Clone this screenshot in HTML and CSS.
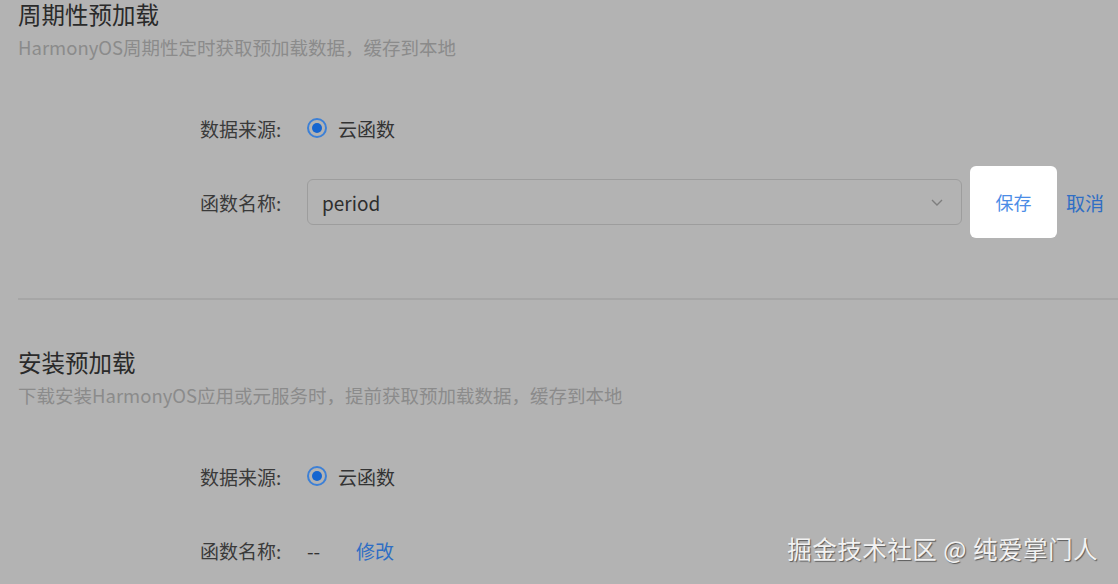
FILE: index.html
```html
<!DOCTYPE html>
<html lang="zh-CN">
<head>
  <meta charset="UTF-8" />
  <meta name="viewport" content="width=device-width, initial-scale=1.0"/>
  <title>预加载配置</title>
  <link rel="stylesheet" href="styles.css">
</head>
<body>

<div class="page">
  <div class="section">
    <h2 class="title">周期性预加载</h2>
    <p class="desc">HarmonyOS周期性定时获取预加载数据，缓存到本地</p>

    <div class="form">
      <div class="row">
        <span class="label">数据来源:</span>
        <span class="radio"><span class="dot"></span></span>
        <span class="value">云函数</span>
      </div>
      <div class="row">
        <span class="label">函数名称:</span>
        <div class="select">
          <span>period</span>
          <svg width="16" height="16" viewBox="0 0 16 16"><path d="M3 6l5 5 5-5" fill="none" stroke="#7e7e7e" stroke-width="1.4"/></svg>
        </div>
        <button class="save">保存</button>
        <a class="link">取消</a>
      </div>
    </div>
  </div>

  <div class="divider"></div>

  <div class="section">
    <h2 class="title">安装预加载</h2>
    <p class="desc">下载安装HarmonyOS应用或元服务时，提前获取预加载数据，缓存到本地</p>

    <div class="form">
      <div class="row">
        <span class="label">数据来源:</span>
        <span class="radio"><span class="dot"></span></span>
        <span class="value">云函数</span>
      </div>
      <div class="row">
        <span class="label">函数名称:</span>
        <span class="empty">--</span>
        <a class="link">修改</a>
      </div>
    </div>
  </div>
</div>

<div class="watermark">掘金技术社区 @ 纯爱掌门人</div>

</body>
</html>
```

FILE: styles.css
```css
body {
  font-family: "Noto Sans CJK SC", "Noto Sans", sans-serif;
  background: #b3b3b3;
  margin: 0;
  padding: 0;
  overflow: hidden;
}
.page {
  padding-left: 18px;
}
.title {
  margin: 0;
  font-size: 23.5px;
  font-weight: normal;
  line-height: 28px;
  color: #2a2a2a;
}
.desc {
  margin: 7px 0 0;
  font-size: 18.5px;
  line-height: 24px;
  color: #8b8b8b;
}
.form {
  margin-top: 46px;
  padding-left: 182px;
  display: flex;
  flex-direction: column;
  gap: 28px;
}
.row {
  display: flex;
  align-items: center;
  height: 46px;
  font-size: 19px;
}
.label {
  width: 107px;
  color: #3a3a3a;
}
.radio {
  width: 20px;
  height: 20px;
  box-sizing: border-box;
  border: 2px solid #3d80d6;
  border-radius: 50%;
  display: flex;
  align-items: center;
  justify-content: center;
}
.dot {
  width: 10px;
  height: 10px;
  border-radius: 50%;
  background: #1565d0;
}
.value {
  margin-left: 11px;
  color: #333;
}
.select {
  width: 655px;
  height: 46px;
  box-sizing: border-box;
  border: 1px solid #9d9d9d;
  border-radius: 6px;
  padding: 0 16px 0 14px;
  display: flex;
  align-items: center;
  justify-content: space-between;
  color: #2e2e2e;
}
.save {
  margin-left: 8px;
  width: 87px;
  height: 72px;
  border: none;
  border-radius: 6px;
  background: #fff;
  color: #4b8ce6;
  font-family: inherit;
  font-size: 18px;
}
.save + .link {
  margin-left: 9px;
}
.link {
  color: #2f6ec4;
  cursor: pointer;
}
.empty {
  width: 49px;
  color: #333;
}
.divider {
  margin: 73px 0 48px;
  border-top: 2px solid #a6a6a6;
}
.watermark {
  position: absolute;
  right: 20px;
  bottom: 18px;
  font-size: 24.5px;
  color: #f2f2f2;
  text-shadow: 1px 1px 1px #5a5a5a;
  letter-spacing: 0.5px;
}
```
